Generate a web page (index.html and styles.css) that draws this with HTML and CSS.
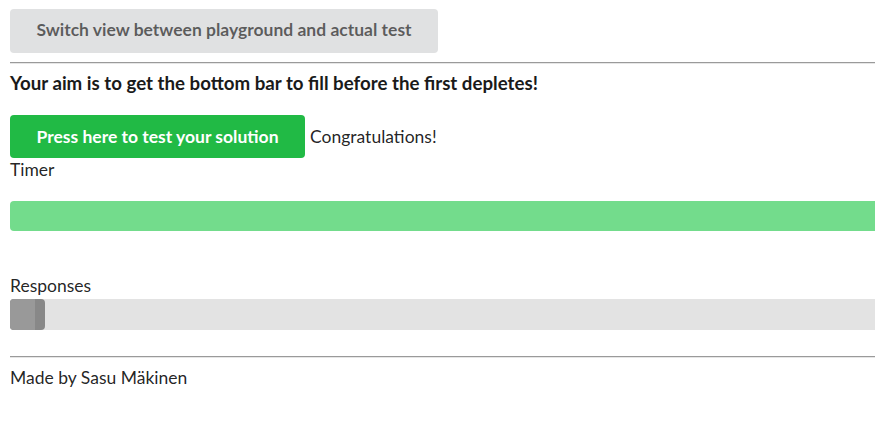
FILE: index.html
```html
<!DOCTYPE html>
<html>
<head>
<meta charset="utf-8">
<link rel="stylesheet" href="styles.css">
</head>
<body>
<div class="page">
  <button class="btn btn-grey">Switch view between playground and actual test</button>
  <hr class="rule rule-top">
  <h3 class="aim">Your aim is to get the bottom bar to fill before the first depletes!</h3>
  <div class="test-row">
    <button class="btn btn-green">Press here to test your solution</button>
    <span class="result">Congratulations!</span>
  </div>
  <div class="label">Timer</div>
  <div class="bar bar-timer"></div>
  <div class="label label-responses">Responses</div>
  <div class="bar bar-responses">
    <div class="fill"><div class="fill-light"></div></div>
  </div>
  <hr class="rule rule-bottom">
  <div class="footer">Made by Sasu Mäkinen</div>
</div>
</body>
</html>
```
FILE: styles.css
```css
html, body {
  margin: 0;
  padding: 0;
  background: #fff;
  overflow: hidden;
}
.page {
  padding: 9px 0 0 10px;
  font-family: Lato, "Open Sans", sans-serif;
  font-size: 17.5px;
  color: rgba(0, 0, 0, 0.87);
  overflow: hidden;
}
.btn {
  display: inline-block;
  border: none;
  border-radius: 4px;
  font-family: Lato, "Open Sans", sans-serif;
  font-weight: 700;
  font-size: 17.5px;
  line-height: 1;
  margin: 0;
  cursor: pointer;
  vertical-align: middle;
}
.btn-grey {
  background: #e0e1e2;
  color: rgba(0, 0, 0, 0.6);
  width: 428px;
  height: 44px;
  padding: 0 20px 2px;
}
.btn-green {
  background: #21ba45;
  color: #fff;
  width: 295px;
  height: 43px;
  padding: 0 20px;
}
.rule {
  border: none;
  border-top: 1px solid #9a9a9a;
  border-bottom: 1px solid #e6e6e6;
  margin: 0;
  height: 0;
}
.rule-top {
  margin-top: 9px;
}
.aim {
  margin: 8px 0 0;
  font-size: 18.7px;
  font-weight: 700;
  line-height: 22px;
  color: #1a1a1a;
}
.test-row {
  margin-top: 21px;
  display: flex;
  align-items: center;
  gap: 5px;
  height: 43px;
}
.result {
  line-height: 20px;
}
.label {
  padding-top: 1px;
  line-height: 22px;
}
.bar {
  width: calc(100% + 10px);
  border-radius: 4px;
}
.bar-timer {
  margin-top: 20px;
  height: 30px;
  background: #73dc8c;
}
.label-responses {
  margin-top: 43px;
}
.bar-responses {
  margin-top: 2px;
  height: 31px;
  background: #e3e3e3;
  display: flex;
}
.fill {
  width: 35px;
  background: #888;
  border-radius: 4px;
  overflow: hidden;
}
.fill-light {
  width: 25px;
  height: 100%;
  background: #999;
}
.rule-bottom {
  margin-top: 26px;
}
.footer {
  margin-top: 9px;
  line-height: 22px;
}
```
